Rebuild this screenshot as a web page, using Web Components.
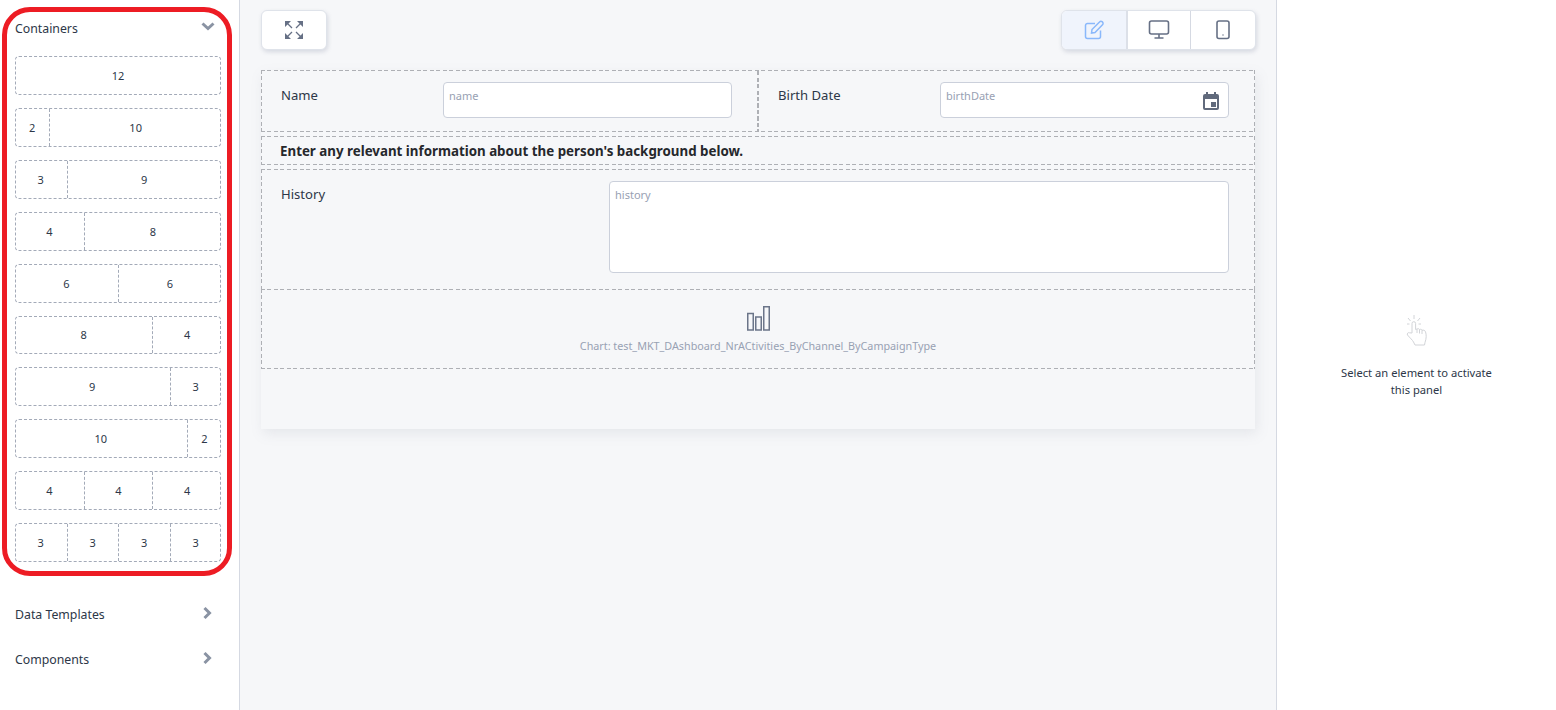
<!DOCTYPE html>
<html>
<head>
<meta charset="utf-8">
<title>Form designer</title>
<style>
  html, body { margin: 0; height: 100%; }
  body { font-family: "Noto Sans", "Open Sans", sans-serif; color: #2d3748; overflow: hidden; }
</style>
</head>
<body>
<designer-app></designer-app>
<script>
class LayoutRow extends HTMLElement {
  constructor() {
    super();
    this.attachShadow({ mode: "open" });
    this.render();
  }
  render() {
    const cols = this.getAttribute("cols").split(",");
    this.shadowRoot.innerHTML = `
      <style>
        :host { display: block; height: 38.91px; box-sizing: border-box; border: 1px dashed #a3aab8; border-radius: 4px; font-size: 11px; color: #2d3748; }
        .cells { display: grid; height: 100%; margin: 0 -1px; grid-template-columns: ${cols.map((c) => c + "fr").join(" ")}; }
        span { display: flex; align-items: center; justify-content: center; min-width: 0; }
        span + span { border-left: 1px dashed #a3aab8; }
      </style>
      <div class="cells">${cols.map((c) => `<span>${c}</span>`).join("")}</div>
    `;
  }
}

class SideSection extends HTMLElement {
  constructor() {
    super();
    this.attachShadow({ mode: "open" });
    const open = this.hasAttribute("open");
    const arrow = open
      ? `<svg class="open" width="14" height="9"><path d="M1.500 1.500 L7 6.500 L12.500 1.500"/></svg>`
      : `<svg class="closed" width="9" height="12"><path d="M1.500 1 L6.500 6 L1.500 11"/></svg>`;
    this.shadowRoot.innerHTML = `
      <style>
        :host { display: block; }
        .head { display: flex; justify-content: space-between; align-items: center; height: 20px; padding: 0 24px 0 15px; font-size: 12.300px; color: #2d3748; }
        svg { display: block; overflow: visible; }
        svg.open { margin-top: -3px; }
        svg.closed { margin: -3px 3px 0 0; }
        path { fill: none; stroke: #8a93a3; stroke-width: 3; }
      </style>
      <div class="head"><span>${this.getAttribute("label")}</span>${arrow}</div>
      <slot></slot>
    `;
  }
}

class DesignerSidebar extends HTMLElement {
  constructor() {
    super();
    this.attachShadow({ mode: "open" });
    const rows = ["12", "2,10", "3,9", "4,8", "6,6", "8,4", "9,3", "10,2", "4,4,4", "3,3,3,3"];
    this.shadowRoot.innerHTML = `
      <style>
        :host { display: block; position: relative; width: 240px; box-sizing: border-box; border-right: 1px solid #d5d9e2; background: #fff; padding-top: 18px; flex: none; }
        .rows { display: flex; flex-direction: column; gap: 13px; padding: 18px 18px 0 15px; }
        side-section.next { margin-top: 42px; }
        side-section.last { margin-top: 25px; }
        .mark { position: absolute; left: 2px; top: 7px; width: 230px; height: 569px; box-sizing: border-box; border: 5px solid #ed1c24; border-radius: 28px; }
      </style>
      <side-section label="Containers" open>
        <div class="rows">
          ${rows.map((r) => `<layout-row cols="${r}"></layout-row>`).join("")}
        </div>
      </side-section>
      <side-section class="next" label="Data Templates"></side-section>
      <side-section class="last" label="Components"></side-section>
      <div class="mark"></div>
    `;
  }
}

class DesignerToolbar extends HTMLElement {
  constructor() {
    super();
    this.attachShadow({ mode: "open" });
    this.shadowRoot.innerHTML = `
      <style>
        :host { display: flex; justify-content: space-between; align-items: flex-start; }
        .btn, .group { height: 38px; border: 1px solid #dfe3ea; border-radius: 6px; background: #fff; box-shadow: 1px 2px 4px rgba(100,110,140,.22); }
        .btn { width: 64px; display: flex; align-items: center; justify-content: center; }
        .group { display: flex; overflow: hidden; margin-right: -1px; }
        .group div { display: flex; align-items: center; justify-content: center; width: 63px; }
        .group div + div { border-left: 1px solid #d5d9e2; }
        .group div.on { background: #f0f4fc; width: 64px; }
        .group div.on + div { border-left-width: 2px; border-left-color: #dce0e8; width: 62px; }
        .group div.last { width: 64px; }
        svg { display: block; fill: none; stroke: #667085; stroke-width: 1.5; }
        svg.expand { stroke-width: 1.300; }
        svg.expand .head { fill: #667085; stroke: none; }
      </style>
      <div class="btn">
        <svg class="expand" width="20" height="20" viewBox="0 0 20 20">
          <path class="head" d="M1 1H7L1 7ZM19 1V7L13 1ZM1 19V13L7 19ZM19 19H13L19 13Z"/>
          <path d="M3 3L8 8M17 3L12 8M3 17L8 12M17 17L12 12"/>
        </svg>
      </div>
      <div class="group">
        <div class="on">
          <svg width="20" height="20" viewBox="0 0 20 20" style="stroke:#8ab8fb">
            <path d="M11 3.500H3.500A2 2 0 0 0 1.500 5.500V16.500A2 2 0 0 0 3.500 18.500H14.500A2 2 0 0 0 16.500 16.500V10.500"/>
            <path d="M7.500 13L8 9.500L15.500 2A1.900 1.900 0 0 1 18.500 4.800L11 12.500Z"/>
          </svg>
        </div>
        <div>
          <svg width="22" height="20" viewBox="0 0 22 20" style="stroke-width:1.6">
            <rect x="1.500" y="1" width="19" height="13" rx="2"/>
            <path d="M11 14V18M6.500 18H15.500"/>
          </svg>
        </div>
        <div class="last">
          <svg width="14" height="20" viewBox="0 0 14 20" style="stroke-width:1.6">
            <rect x="1" y="1" width="12" height="17.500" rx="2"/>
            <path d="M6.500 15H7.500" />
          </svg>
        </div>
      </div>
    `;
  }
}

class FormField extends HTMLElement {
  constructor() {
    super();
    this.attachShadow({ mode: "open" });
    this.shadowRoot.innerHTML = `
      <style>
        :host { display: flex; flex: 1 1 0; min-width: 0; box-sizing: border-box; padding: 11px 25px 13px 19px; }
        label { font-size: 13.100px; line-height: 27px; color: #2d3748; flex: none; }
        .input { flex: 1; position: relative; box-sizing: border-box; background: #fff; border: 1px solid #cbd0db; border-radius: 4px; font-size: 11px; line-height: 15px; color: #98a1b3; padding: 5px 5px; }
      </style>
      <label></label>
      <div class="input"><span></span><slot></slot></div>
    `;
    this.shadowRoot.querySelector("label").textContent = this.getAttribute("label");
    this.shadowRoot.querySelector("label").style.width = this.getAttribute("label-width") + "px";
    this.shadowRoot.querySelector("span").textContent = this.getAttribute("placeholder");
    this.shadowRoot.querySelector(".input").style.height = this.getAttribute("input-height") + "px";
  }
}

class FormCanvas extends HTMLElement {
  constructor() {
    super();
    this.attachShadow({ mode: "open" });
    this.shadowRoot.innerHTML = `
      <style>
        :host { display: block; height: 359px; background: #f6f7f9; box-shadow: 2px 5px 12px rgba(120,130,150,.13); margin-top: 20px; font-size: 14px;
          --dash-h: repeating-linear-gradient(90deg, #aeb0b5 0 4px, transparent 4px 6.500px);
          --dash-v: repeating-linear-gradient(180deg, #aeb0b5 0 4px, transparent 4px 6.500px); }
        .row { box-sizing: border-box; border: 1px solid transparent; background-origin: border-box; background-clip: border-box;
          background-image: var(--dash-h), var(--dash-h), var(--dash-v), var(--dash-v);
          background-size: 100% 1px, 100% 1px, 1px 100%, 1px 100%;
          background-position: left top, left bottom, left top, right top;
          background-repeat: no-repeat; }
        .two { display: flex; height: 62px; }
        .two form-field:first-child { padding-right: 26px; }
        .two form-field + form-field { border-left: 2px solid transparent; margin-left: -1px; background: var(--dash-v) left top / 2px 100% no-repeat; background-origin: border-box; background-clip: border-box; padding-left: 19px; }
        .note { height: 29px; margin-top: 4px; padding-left: 18px; font-weight: 700; font-size: 13.330px; line-height: 29px; color: #26282c; }
        .hist { height: 121px; margin-top: 4px; display: flex; }
        .chart { height: 80px; margin-top: -1px; display: flex; flex-direction: column; align-items: center; padding-top: 16px; font-size: 10.770px; color: #98a1b3; }
        .chart svg { display: block; margin: 0 0 7px 2px; fill: none; stroke: #6b7589; stroke-width: 1.500; }
      </style>
      <div class="row two">
        <form-field label="Name" label-width="162" placeholder="name" input-height="36"></form-field>
        <form-field label="Birth Date" label-width="162" placeholder="birthDate" input-height="36">
          <svg width="16" height="18" viewBox="0 0 16 18" style="position:absolute;right:9px;top:9px">
            <path fill="#616a7c" d="M3 0H5V2H11V0H13V2H14A2 2 0 0 1 16 4V16A2 2 0 0 1 14 18H2A2 2 0 0 1 0 16V4A2 2 0 0 1 2 2H3ZM2 7V16H14V7ZM8 10H13V15H8Z" fill-rule="evenodd"/>
          </svg>
        </form-field>
      </div>
      <div class="row note">Enter any relevant information about the person's background below.</div>
      <div class="row hist">
        <form-field label="History" label-width="328" placeholder="history" input-height="92"></form-field>
      </div>
      <div class="row chart">
        <svg width="24" height="25" viewBox="0 0 24 25">
          <rect x="0.750" y="7.500" width="5.500" height="16.500"/>
          <rect x="8.750" y="11" width="5.500" height="13"/>
          <rect x="16.750" y="0.750" width="5.500" height="23.250"/>
        </svg>
        <span>Chart: test_MKT_DAshboard_NrACtivities_ByChannel_ByCampaignType</span>
      </div>
    `;
  }
}

class PropsPanel extends HTMLElement {
  constructor() {
    super();
    this.attachShadow({ mode: "open" });
    this.shadowRoot.innerHTML = `
      <style>
        :host { display: flex; flex-direction: column; align-items: center; width: 280px; flex: none; box-sizing: border-box; background: #fff; border-left: 1px solid #d5d9e2; padding-top: 314px; font-size: 11.200px; line-height: 17px; color: #2d3748; text-align: center; }
        svg { display: block; margin-bottom: 18px; fill: none; stroke: #d2d4d8; stroke-width: 1; }
        p { margin: 0; width: 170px; }
      </style>
      <svg width="22" height="32" viewBox="0 0 22 32">
        <path d="M8 1V5M2 4L4.500 7M14 4L11.500 7M1 10H3.500M12.500 10H15"/>
        <path d="M6 19V9.500A1.800 1.800 0 0 1 9.600 9.500V15.500L11 15C12 14.500 13 14.500 13.500 15.500C14.800 15 15.800 15.300 16 16.300C17.500 15.800 19 16.300 19.500 17.800C20.500 21 20.500 24 19 28.500L18.500 31H9L7.500 28C6.500 26 4 24 1.500 21C0.800 19.800 2 18 3.500 18.800Z"/>
        <path d="M11 15V19M13.500 15.500V19.500M16 16.300V20"/>
      </svg>
      <p>Select an element to activate this panel</p>
    `;
  }
}

class DesignerApp extends HTMLElement {
  constructor() {
    super();
    this.attachShadow({ mode: "open" });
    this.shadowRoot.innerHTML = `
      <style>
        :host { display: flex; height: 710px; width: 1556px; background: #f6f7f9; }
        main { flex: 1; min-width: 0; box-sizing: border-box; padding: 10px 21px 0 21px; }
      </style>
      <designer-sidebar></designer-sidebar>
      <main>
        <designer-toolbar></designer-toolbar>
        <form-canvas></form-canvas>
      </main>
      <props-panel></props-panel>
    `;
  }
}

customElements.define("layout-row", LayoutRow);
customElements.define("side-section", SideSection);
customElements.define("designer-sidebar", DesignerSidebar);
customElements.define("designer-toolbar", DesignerToolbar);
customElements.define("form-field", FormField);
customElements.define("form-canvas", FormCanvas);
customElements.define("props-panel", PropsPanel);
customElements.define("designer-app", DesignerApp);
</script>
</body>
</html>
